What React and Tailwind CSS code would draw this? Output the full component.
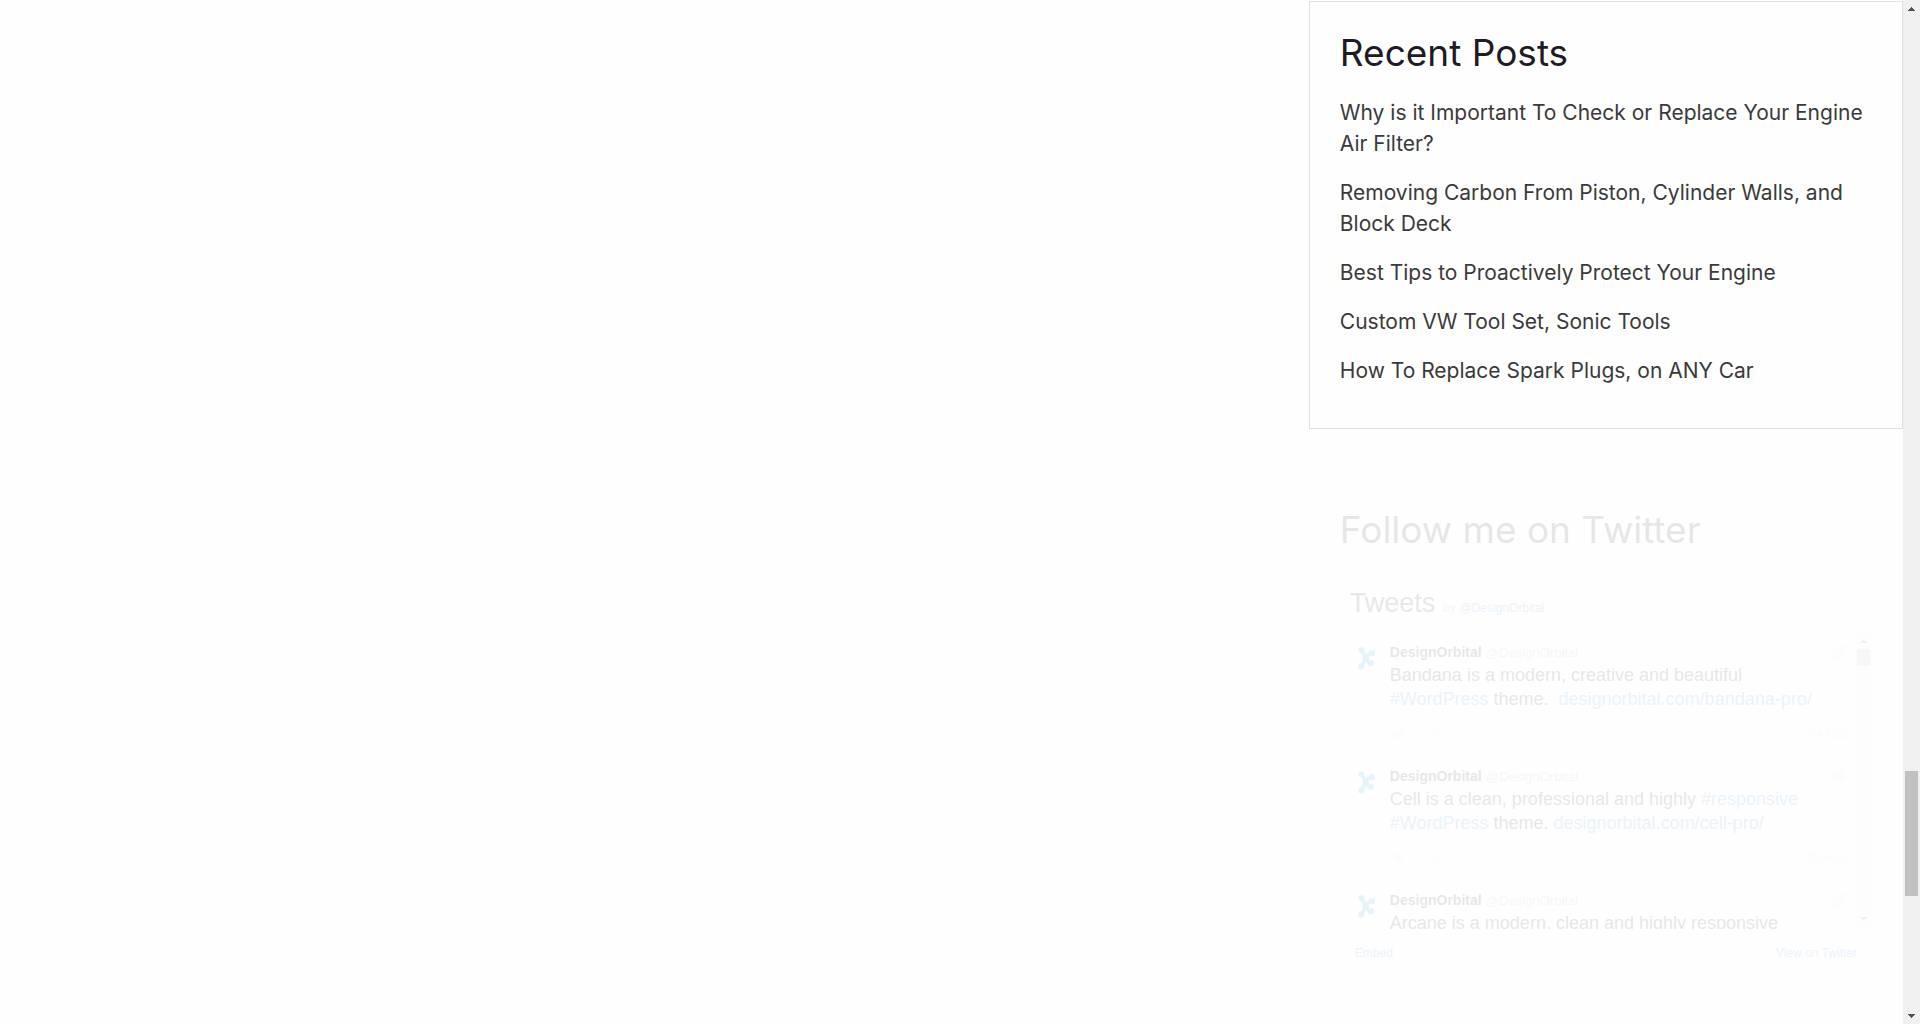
const posts = [
  "Why is it Important To Check or Replace Your Engine Air Filter?",
  "Removing Carbon From Piston, Cylinder Walls, and Block Deck",
  "Best Tips to Proactively Protect Your Engine",
  "Custom VW Tool Set, Sonic Tools",
  "How To Replace Spark Plugs, on ANY Car",
];

const Tag = ({ children }) => (
  <a href="#" className="text-[#3b94d9]">
    {children}
  </a>
);

const tweets = [
  {
    date: "04 Oct",
    body: (
      <>
        Bandana is a modern, creative and beautiful <Tag>#WordPress</Tag> theme.&nbsp; <Tag>designorbital.com/bandana-pro/</Tag>
      </>
    ),
  },
  {
    date: "22 Aug",
    body: (
      <>
        Cell is a clean, professional and highly <Tag>#responsive</Tag> <Tag>#WordPress</Tag> theme. <Tag>designorbital.com/cell-pro/</Tag>
      </>
    ),
  },
  {
    date: "",
    body: "Arcane is a modern, clean and highly responsive",
  },
];

function Arrow({ down, className }) {
  return (
    <svg viewBox="0 0 7 4" className={`h-1 w-[7px] ${className ?? ""}`} shapeRendering="crispEdges" fill="currentColor" aria-hidden="true">
      <path d={down ? "M0 0h7v1H6v1H5v1H4v1H3V3H2V2H1V1H0z" : "M3 0h1v1h1v1h1v1h1v1H0V3h1V2h1V1h1z"} />
    </svg>
  );
}

function Avatar() {
  return (
    <svg viewBox="0 0 17 23" className="mt-[7px] h-[23px] w-[17px] shrink-0" fill="none" stroke="#18a0d8" strokeLinecap="round" aria-hidden="true">
      <path d="M3.500 3.500 6.500 8.500 6.500 14 3.500 19.500M6.500 9.500 13.500 6M7 13 12.500 16" strokeWidth="3.500" />
      <path d="M3.300 3.300h.1M14 6.200h.1M3.200 19.500h.1M12.800 16h.1" strokeWidth="6" />
      <path d="M8 11.500h.1" strokeWidth="6" />
    </svg>
  );
}

function Bird() {
  return (
    <svg viewBox="0 0 24 24" className="h-4 w-4" fill="#d9f7f5" aria-hidden="true">
      <path d="M23.950 4.570a10 10 0 0 1-2.820.770 4.960 4.960 0 0 0 2.160-2.720c-.950.550-2 .960-3.130 1.190a4.920 4.920 0 0 0-8.380 4.480C7.690 8.100 4.070 6.130 1.640 3.160a4.820 4.820 0 0 0-.670 2.480c0 1.710.870 3.210 2.190 4.100a4.900 4.900 0 0 1-2.230-.620v.060a4.920 4.920 0 0 0 3.950 4.830 5 5 0 0 1-2.210.080 4.940 4.940 0 0 0 4.600 3.420A9.870 9.870 0 0 1 0 19.540a13.940 13.940 0 0 0 7.550 2.210c9.050 0 14-7.500 14-13.980l-.020-.640a9.930 9.930 0 0 0 2.420-2.560z" />
    </svg>
  );
}

function Tweet({ date, body }) {
  return (
    <li className="flex h-[124px] gap-[15px] border-t border-[#f1f4f6] px-2 pt-[7px]">
      <Avatar />
      <div className="min-w-0 flex-1">
        <div className="flex h-[23px] items-center justify-between leading-[23px]">
          <p>
            <b className="text-sm leading-[23px] text-[#1c2022]">DesignOrbital</b>{" "}
            <a href="#" className="text-[13px] text-[#a9b8ba]">@DesignOrbital</a>
          </p>
          <a href="#" aria-label="View tweet"><Bird /></a>
        </div>
        <p className="pr-5 text-lg leading-6 text-[#1c2022]">{body}</p>
        <div className="mt-[11px] flex h-6 items-center text-[#e6f8f6]">
          <button type="button" aria-label="Like" className="ml-0.5 mr-7">
            <svg viewBox="0 0 12 11" className="h-[11px] w-3" fill="currentColor"><path d="M6 11 1 6C-1.500 3 1.500-1.500 6 1.500 10.500-1.500 13.500 3 11 6z" /></svg>
          </button>
          <button type="button" aria-label="Share" className="text-[#f1f5f5]">
            <svg viewBox="0 0 14 12" className="h-3 w-[14px]" fill="none" stroke="currentColor" strokeWidth="2"><path d="M7 1H1v10h6V9M7 3V1M4 6h9M10 3l3 3-3 3" /></svg>
          </button>
          <time className="ml-auto text-[13px] text-[#e4e8ea]">{date}</time>
        </div>
      </div>
    </li>
  );
}

export default function App() {
  return (
    <div className="flex h-screen overflow-hidden bg-[#fefefe]">
      <main className="flex-1" />
      <aside className="w-[31%] min-w-[594px] pt-px pl-px font-[Inter,sans-serif]">
        <section className="border border-[#dfdfe6] px-[30px] pt-[26px] pb-[42px]">
          <h2 className="text-[37px] leading-[50px] text-[#1d1b26]">Recent Posts</h2>
          <ul className="mt-[19px] flex flex-col gap-[18px] text-[21px] leading-[31px] text-[#3a3a3a]">
            {posts.map((p) => (
              <li key={p}><a href="#">{p}</a></li>
            ))}
          </ul>
        </section>

        <section className="mt-[49px] border border-[#f1f1f4] px-[30px] pt-[26px] pb-[50px] opacity-10">
          <h2 className="text-[37px] leading-[50px] text-[#1d1b26]">Follow me on Twitter</h2>
          <div className="mt-7 font-['Liberation_Sans',sans-serif]">
            <h3 className="flex items-baseline gap-2 pl-[10px] text-[27px] leading-10 text-[#292f33]">
              Tweets
              <span className="text-xs text-[#a9b8c4]">
                by <a href="#" className="text-[#3b94d9]">@DesignOrbital</a>
              </span>
            </h3>
            <div className="mt-[9px] flex h-[297px]">
              <ul className="ml-[10px] flex-1 overflow-hidden">
                {tweets.map((t) => <Tweet key={t.date} {...t} />)}
              </ul>
              <div className="flex w-[17px] flex-col items-center bg-[#f8f8f8] text-[#808080]">
                <Arrow className="mt-[7px]" />
                <div className="mt-[6px] h-[17px] w-[13px] bg-[#c1c1c1]" />
                <Arrow down className="mt-auto mb-2" />
              </div>
            </div>
            <div className="flex justify-between px-[15px] pt-3 text-xs leading-6 text-[#3b94d9]">
              <a href="#">Embed</a>
              <a href="#">View on Twitter</a>
            </div>
          </div>
        </section>
      </aside>

      <div className="flex w-[17px] shrink-0 flex-col items-center bg-[#f0f0f0] text-[#505050]">
        <span className="flex h-[17px] items-center"><Arrow /></span>
        <div className="flex-[754]" />
        <div className="w-[13px] flex-[125] bg-[#c1c1c1]" />
        <div className="flex-[111]" />
        <span className="flex h-[17px] items-center"><Arrow down /></span>
      </div>
    </div>
  );
}
